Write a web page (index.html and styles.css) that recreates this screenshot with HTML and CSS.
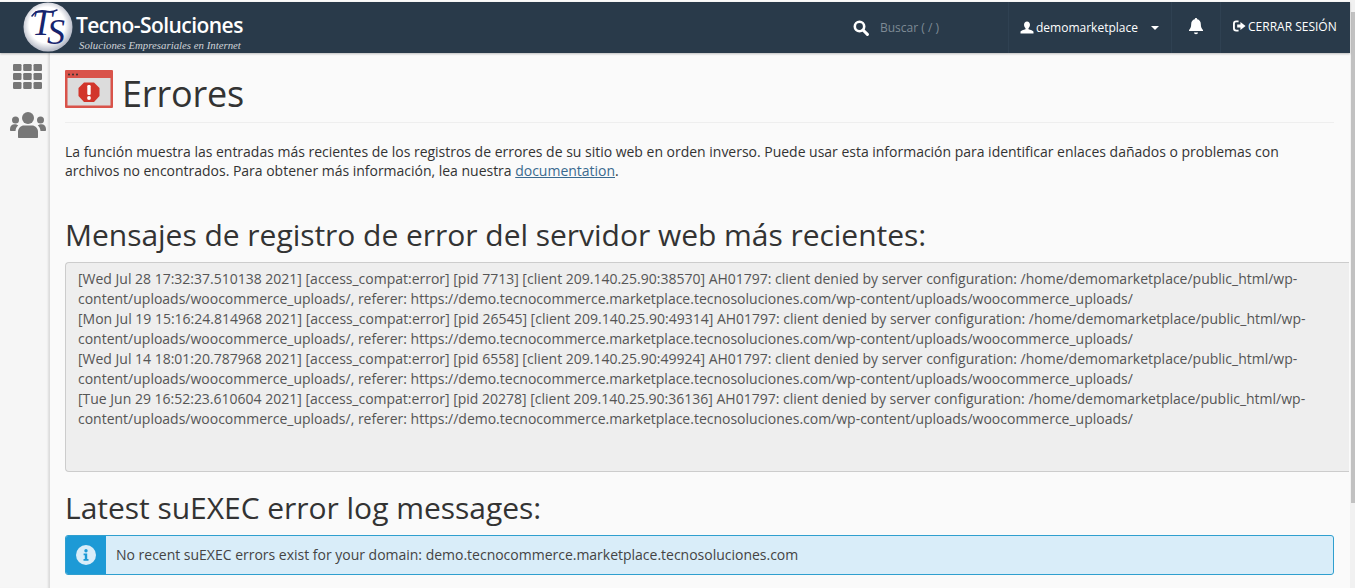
FILE: index.html
```html
<!DOCTYPE html>
<html lang="es">
<head>
<meta charset="utf-8">
<title>Errores</title>
<link rel="stylesheet" href="styles.css">
</head>
<body>
<div class="page">
<header class="topbar">
  <div class="brand">
    <svg class="logo" viewBox="0 0 50 50">
      <defs><radialGradient id="lg" cx="48%" cy="46%" r="52%"><stop offset="70%" stop-color="#ffffff"/><stop offset="100%" stop-color="#b9bdc9"/></radialGradient></defs>
      <circle cx="25" cy="25" r="24.500" fill="url(#lg)"/>
      <path d="M9 14c3-5 9-6 13-5 4 1 8 1 12-1" fill="none" stroke="#16246e" stroke-width="1.500" stroke-linecap="round"/>
      <text class="logo-text" x="9" y="33">T<tspan dx="-5" dy="9">S</tspan></text>
    </svg>
    <div class="brand-text">
      <div class="brand-name">Tecno-Soluciones</div>
      <div class="brand-tag">Soluciones Empresariales en Internet</div>
    </div>
  </div>
  <div class="top-actions">
    <div class="search">
      <svg class="ico-search" viewBox="0 0 16 16"><circle cx="6.500" cy="6.500" r="4.700" fill="none" stroke="#fff" stroke-width="2.600"/><path d="M10 10l4.400 4.400" stroke="#fff" stroke-width="3" stroke-linecap="round"/></svg>
      <span class="search-text">Buscar ( / )</span>
    </div>
    <div class="user">
      <svg class="ico-user" viewBox="0 0 14 14"><path d="M7 .5c2 0 3.200 1.500 3.200 3.600 0 1.500-.7 2.900-1.600 3.600v1.100c1.900.7 5.400 1.400 5.400 2.900v1.800H0v-1.800c0-1.500 3.500-2.200 5.400-2.900V7.700C4.500 7 3.800 5.600 3.800 4.100 3.800 2 5 .5 7 .5z" fill="#fff"/></svg>
      <span class="user-name">demomarketplace</span>
      <span class="caret"></span>
    </div>
    <div class="bell">
      <svg class="ico-bell" viewBox="0 0 16 18"><path d="M8 1c.7 0 1.200.5 1.200 1.200 2.300.5 3.600 2.400 3.600 4.800 0 3.500 1 4.800 2.200 6v1H1v-1c1.200-1.200 2.200-2.500 2.200-6 0-2.400 1.300-4.300 3.600-4.800C6.800 1.500 7.300 1 8 1z" fill="#fff"/><path d="M6 15.500h4c0 1-.9 1.700-2 1.700s-2-.7-2-1.700z" fill="#fff"/></svg>
    </div>
    <div class="logout">
      <svg class="ico-logout" viewBox="0 0 14 12"><path d="M6 1H3.500C2 1 1 2 1 3.500v5C1 10 2 11 3.500 11H6" fill="none" stroke="#fff" stroke-width="2"/><path d="M4.500 4.500H8V1.800L13.500 6 8 10.200V7.500H4.500z" fill="#fff"/></svg>
      <span class="logout-text">CERRAR SESIÓN</span>
    </div>
  </div>
</header>
<div class="shell">
  <aside class="side">
    <svg class="ico-grid" viewBox="0 0 29 25"><g fill="#777"><rect x="0" y="0" width="8.500" height="7" rx="1.200"/><rect x="10.200" y="0" width="8.500" height="7" rx="1.200"/><rect x="20.500" y="0" width="8.500" height="7" rx="1.200"/><rect x="0" y="9" width="8.500" height="7" rx="1.200"/><rect x="10.200" y="9" width="8.500" height="7" rx="1.200"/><rect x="20.500" y="9" width="8.500" height="7" rx="1.200"/><rect x="0" y="18" width="8.500" height="7" rx="1.200"/><rect x="10.200" y="18" width="8.500" height="7" rx="1.200"/><rect x="20.500" y="18" width="8.500" height="7" rx="1.200"/></g></svg>
    <svg class="ico-users" viewBox="0 0 36 26"><g fill="#777"><circle cx="18" cy="6" r="6"/><circle cx="5.500" cy="8" r="3.500"/><circle cx="30.500" cy="8" r="3.500"/><path d="M8 25v-5c0-4 3-6.500 6-6.500h8c3 0 6 2.500 6 6.500v5c0 .6-.4 1-1 1H9c-.6 0-1-.4-1-1z"/><path d="M0 17c0-3 2-4.800 4.500-4.800 1.500 0 2.800.4 3.700 1.200-1.600 1.300-2.500 3-2.700 5.600H1c-.6 0-1-.4-1-1z"/><path d="M36 17c0-3-2-4.800-4.500-4.800-1.500 0-2.800.4-3.700 1.200 1.600 1.300 2.500 3 2.700 5.600H35c.6 0 1-.4 1-1z"/></g></svg>
  </aside>
  <main class="main">
    <div class="page-head">
      <svg class="ico-page" viewBox="0 0 48 38"><rect width="48" height="38" rx="1" fill="#d9534a"/><rect x="2.500" y="8" width="43" height="27.500" fill="#dcdcdc"/><circle cx="4" cy="4.500" r="1" fill="#333"/><circle cx="8" cy="4.500" r="1" fill="#333"/><circle cx="12" cy="4.500" r="1" fill="#333"/><path d="M19 12.500h10l5.500 5.500v8L29 32H19l-5.500-6v-8z" fill="#d2352b"/><rect x="22.300" y="15" width="3.400" height="10" rx="1.200" fill="#fff"/><circle cx="24" cy="28" r="1.900" fill="#fff"/></svg>
      <h1>Errores</h1>
    </div>
    <p class="intro">La función muestra las entradas más recientes de los registros de errores de su sitio web en orden inverso. Puede usar esta información para identificar enlaces dañados o problemas con archivos no encontrados. Para obtener más información, lea nuestra <a href="#">documentation</a>.</p>
    <h2 class="h-first">Mensajes de registro de error del servidor web más recientes:</h2>
    <div class="logbox">[Wed Jul 28 17:32:37.510138 2021] [access_compat:error] [pid 7713] [client 209.140.25.90:38570] AH01797: client denied by server configuration: /home/demomarketplace/public_html/wp-content/uploads/woocommerce_uploads/, referer: https://demo.tecnocommerce.marketplace.tecnosoluciones.com/wp-content/uploads/woocommerce_uploads/
[Mon Jul 19 15:16:24.814968 2021] [access_compat:error] [pid 26545] [client 209.140.25.90:49314] AH01797: client denied by server configuration: /home/demomarketplace/public_html/wp-content/uploads/woocommerce_uploads/, referer: https://demo.tecnocommerce.marketplace.tecnosoluciones.com/wp-content/uploads/woocommerce_uploads/
[Wed Jul 14 18:01:20.787968 2021] [access_compat:error] [pid 6558] [client 209.140.25.90:49924] AH01797: client denied by server configuration: /home/demomarketplace/public_html/wp-content/uploads/woocommerce_uploads/, referer: https://demo.tecnocommerce.marketplace.tecnosoluciones.com/wp-content/uploads/woocommerce_uploads/
[Tue Jun 29 16:52:23.610604 2021] [access_compat:error] [pid 20278] [client 209.140.25.90:36136] AH01797: client denied by server configuration: /home/demomarketplace/public_html/wp-content/uploads/woocommerce_uploads/, referer: https://demo.tecnocommerce.marketplace.tecnosoluciones.com/wp-content/uploads/woocommerce_uploads/</div>
    <h2 class="h-second">Latest suEXEC error log messages:</h2>
    <div class="alert">
      <div class="alert-side"><svg class="ico-info" viewBox="0 0 20 20"><circle cx="10" cy="10" r="10" fill="#d9edf9"/><circle cx="10" cy="5.800" r="1.700" fill="#1d9ad6"/><path d="M7.600 8.500h3.600v5.500h1.300v1.700H7.500V14h1.300v-3.800H7.600z" fill="#1d9ad6"/></svg></div>
      <div class="alert-body">No recent suEXEC errors exist for your domain: demo.tecnocommerce.marketplace.tecnosoluciones.com</div>
    </div>
  </main>
</div>
</div>
<div class="scrollbar"><div class="thumb"></div></div>
</body>
</html>
```
FILE: styles.css
```css
* { box-sizing: border-box; }
html, body { margin: 0; padding: 0; height: 100%; overflow: hidden; }
body { font-family: "Open Sans", sans-serif; background: #fafafa; color: #333; display: flex; height: 588px; }
.page { flex: 1; min-width: 0; display: flex; flex-direction: column; padding-top: 2px; }
.topbar { height: 51px; flex: none; background: #293a4a; color: #fff; display: flex; justify-content: space-between; box-shadow: 0 1px 2px rgba(0,0,0,.25); position: relative; z-index: 2; }
.brand { display: flex; align-items: flex-start; padding-left: 23px; }
.logo { width: 50px; height: 50px; flex: none; }
.logo-text { font-family: "Liberation Serif", serif; font-style: italic; font-size: 36px; fill: #16246e; }
.brand-text { margin-left: 3px; }
.brand-name { font-size: 21px; font-weight: 600; line-height: 24px; margin-top: 11px; white-space: nowrap; letter-spacing: -.55px; }
.brand-tag { font-family: "Liberation Serif", serif; font-style: italic; font-size: 10.800px; line-height: 12px; color: #cfd3d8; margin-top: 2px; margin-left: 3px; white-space: nowrap; }
.top-actions { display: flex; height: 100%; }
.search { width: 168px; display: flex; align-items: center; padding-left: 13px; font-size: 12px; color: #7e8a95; }
.ico-search { width: 16px; height: 16px; margin-right: 11px; }
.user { width: 163px; display: flex; align-items: center; padding-left: 11px; border-left: 1px solid #2f4152; font-size: 12px; font-weight: 500; }
.ico-user { width: 14px; height: 13px; margin-right: 2px; }
.caret { width: 0; height: 0; margin-left: 13px; border-left: 4px solid transparent; border-right: 4px solid transparent; border-top: 4px solid #fff; }
.bell { width: 49px; display: flex; align-items: center; justify-content: center; border-left: 1px solid #2f4152; }
.ico-bell { width: 16px; height: 18px; margin-bottom: 3px; }
.logout { width: 130px; display: flex; align-items: center; padding: 0 0 3px 12px; border-left: 1px solid #2f4152; font-size: 12px; font-weight: 500; white-space: nowrap; }
.ico-logout { width: 13px; height: 12px; margin-right: 2px; }
.shell { flex: 1; display: flex; min-height: 0; }
.side { width: 50px; flex: none; background: #f6f6f6; box-shadow: inset -3px 0 2px -1px #dcdcdc; padding: 11px 0 0 10px; display: flex; flex-direction: column; }
.ico-grid { width: 29px; height: 25px; margin-left: 3px; }
.ico-users { width: 36px; height: 26px; margin-top: 23px; }
.main { flex: 1; min-width: 0; padding: 17px 16px 0 15px; }
.page-head { display: flex; align-items: flex-start; height: 53px; border-bottom: 1px solid #eee; }
.ico-page { width: 48px; height: 38px; flex: none; }
h1 { margin: -1px 0 0 9px; font-size: 36px; line-height: 49px; font-weight: 400; color: #333; letter-spacing: -.15px; }
.intro { margin: 19px 0 0; font-size: 14px; line-height: 19px; color: #333; letter-spacing: -.015px; }
.intro a { color: #3a6a8f; }
h2 { margin: 0; font-weight: 400; font-size: 30px; line-height: 40px; color: #333; white-space: nowrap; letter-spacing: -.03px; }
.h-first { margin-top: 35px; }
.logbox { margin: 7px -15px 0 0; height: 210px; padding: 6px 30px 6px 12px; background: #eee; border: 1px solid #ccc; border-right: 0; border-radius: 4px 0 0 4px; font-size: 14px; line-height: 20px; color: #555; white-space: pre-line; overflow: hidden; letter-spacing: -.005px; }
.h-second { margin-top: 16px; }
.alert { display: flex; margin-top: 7px; height: 40px; border: 1px solid #2f9fcf; border-radius: 3px; background: #d9edf9; overflow: hidden; }
.alert-side { width: 40px; flex: none; background: #1d9ad6; display: flex; align-items: center; justify-content: center; }
.ico-info { width: 20px; height: 20px; }
.alert-body { padding-left: 10px; font-size: 14px; line-height: 38px; color: #444; letter-spacing: -.01px; }
.scrollbar { width: 5px; flex: none; background: #f1f1f1; padding-top: 12px; }
.thumb { margin-left: 1px; height: 491px; background: #c1c1c1; }
```
